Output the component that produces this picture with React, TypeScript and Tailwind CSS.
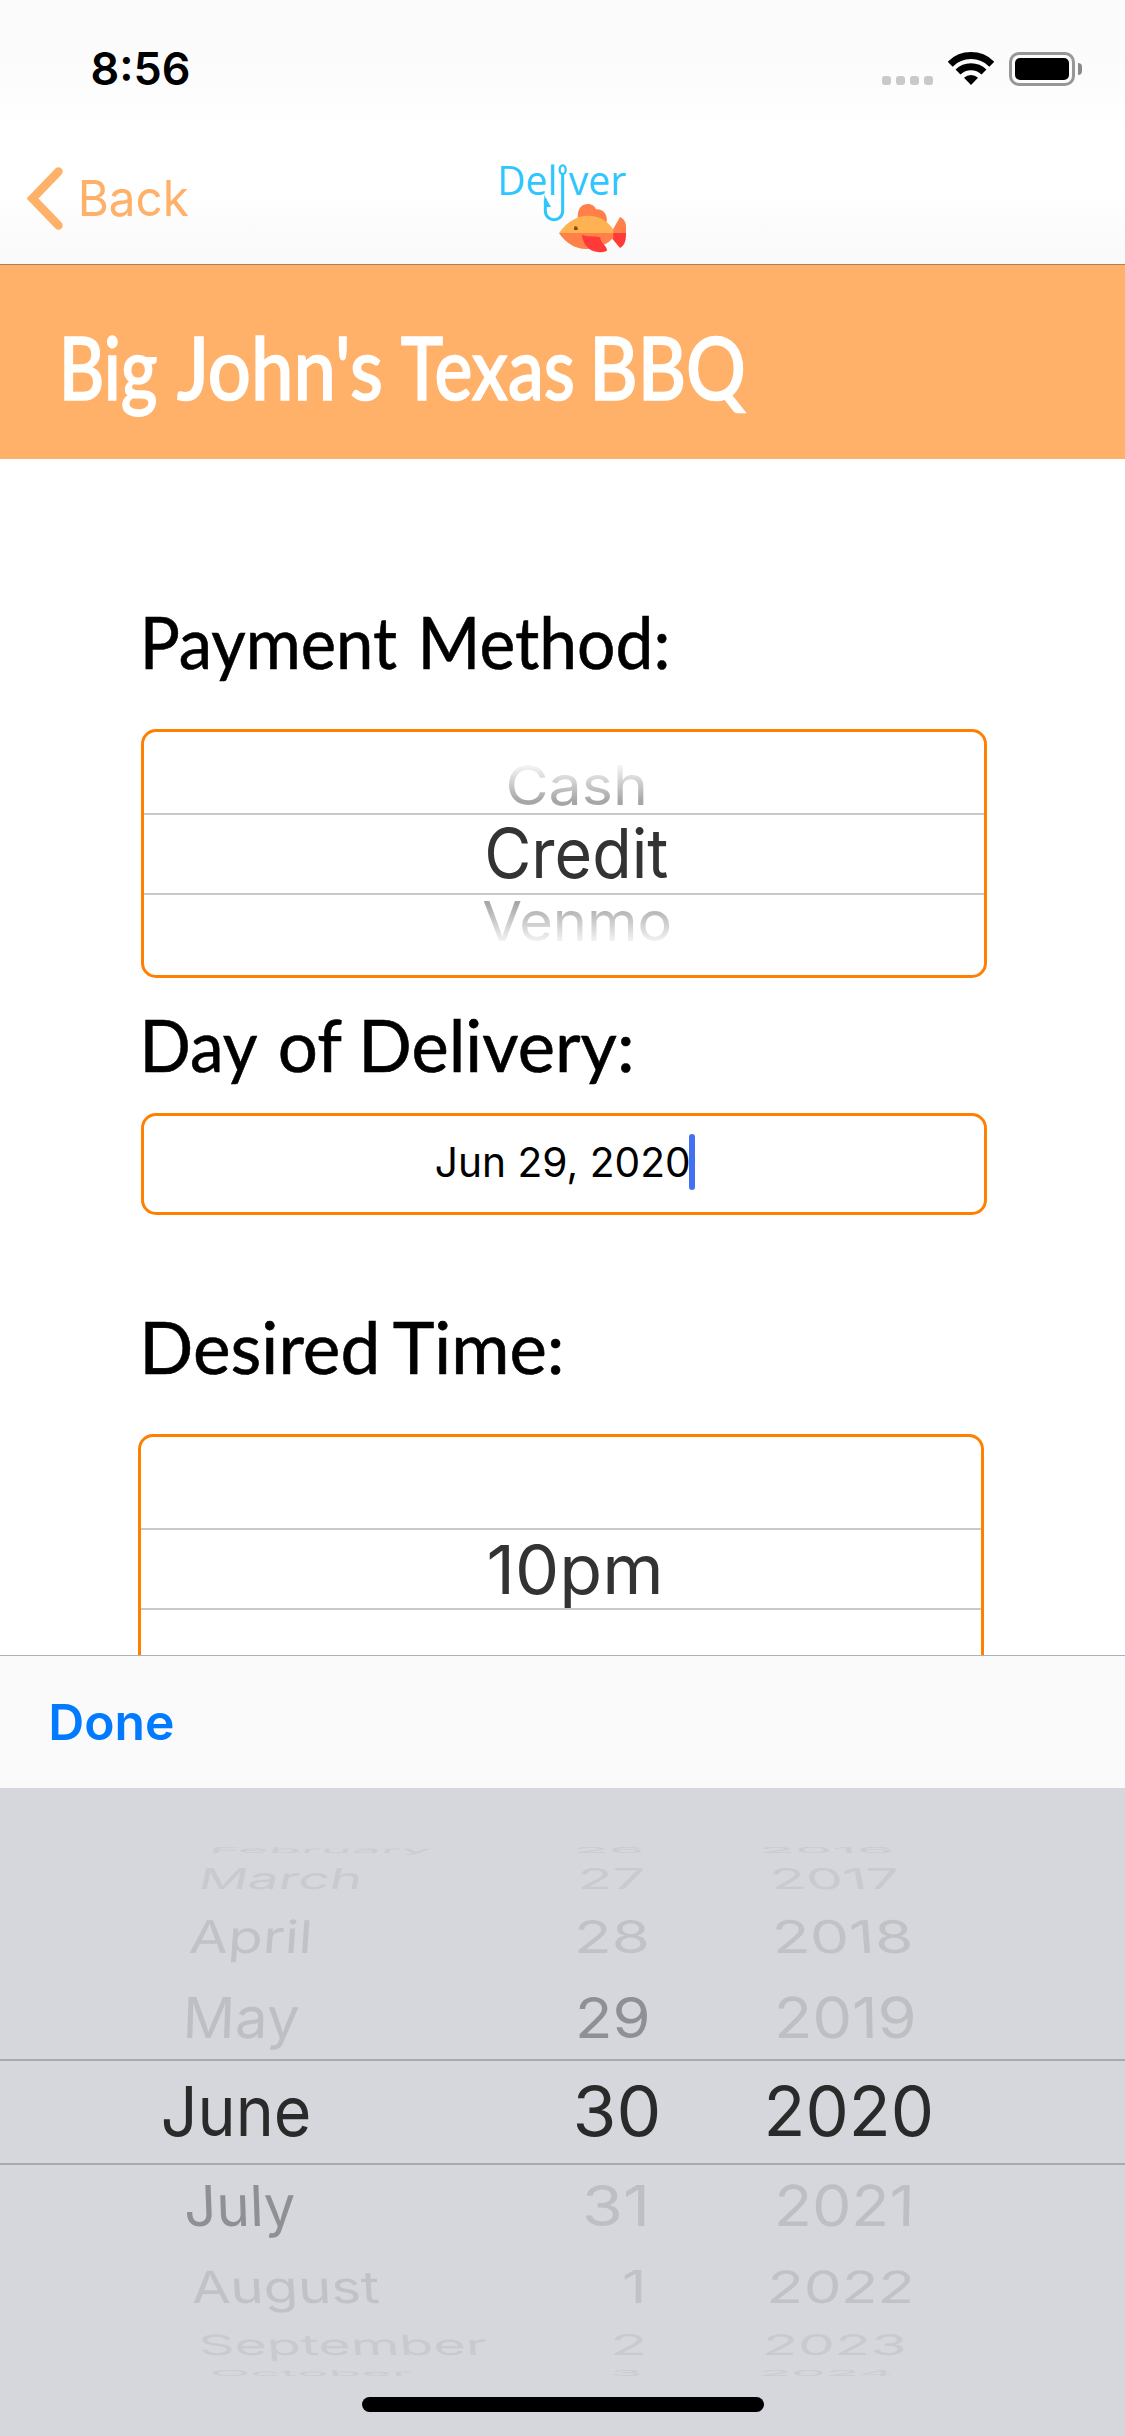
import { useLayoutEffect, useRef } from "react";

/** Text stretched horizontally so that its ink fills the width of its box. */
function FitText({ text, box, className = "", skew = 0 }: { text: string; box: string; className?: string; skew?: number }) {
  const ref = useRef<HTMLSpanElement>(null);
  useLayoutEffect(() => {
    const el = ref.current;
    const ctx = document.createElement("canvas").getContext("2d");
    if (!el || !el.parentElement || !ctx) return;
    const cs = getComputedStyle(el);
    const size = parseFloat(cs.fontSize);
    ctx.font = `${cs.fontWeight} 200px ${cs.fontFamily}`;
    const k = size / 200;
    const m = ctx.measureText(text);
    const ink = (m.actualBoundingBoxLeft + m.actualBoundingBoxRight) * k;
    const scale = (el.parentElement.clientWidth - 1.4) / ink;
    el.style.transform = `translateX(0.7px) skewX(${skew}deg) scaleX(${scale}) translateX(${m.actualBoundingBoxLeft * k}px)`;
  }, [text, skew]);
  return (
    <div className={`shrink-0 ${box}`}>
      <span ref={ref} className={`inline-block origin-left whitespace-nowrap align-top ${className}`}>
        {text}
      </span>
    </div>
  );
}

function StatusBar() {
  return (
    <div className="flex h-[138px] items-start pl-[92px] pt-[46px]">
      <FitText text="8:56" box="w-[97px]" className="text-[45px] font-semibold leading-[46px] text-black" />
      <div className="ml-[693px] mt-[30px] flex gap-[5px]">
        {[0, 1, 2, 3].map((i) => (
          <span key={i} className="h-[9px] w-[9px] rounded-[3px] bg-[#c9c9c9]" />
        ))}
      </div>
      <svg className="ml-[15px] mt-[6px] h-[33px] w-[46px]" viewBox="0 0 46 33" fill="none" stroke="#000" strokeWidth="7">
        <path d="M2.2 12.2A29.5 29.5 0 0 1 43.8 12.2" />
        <path d="M10 20A18.5 18.5 0 0 1 36 20" />
        <path d="M23 33L16 25.8A10 10 0 0 1 30 25.8Z" fill="#000" stroke="none" />
      </svg>
      <div className="ml-[15px] mt-[6px] flex items-center">
        <div className="h-[34px] w-[66px] rounded-[10px] border-[3px] border-[#979797] p-[3px]">
          <div className="h-[22px] w-[54px] rounded-[5px] bg-black" />
        </div>
        <span className="ml-[3px] h-[12px] w-[4px] rounded-r-full bg-[#8a8a8a]" />
      </div>
    </div>
  );
}

function Logo() {
  return (
    <svg className="h-[110px] w-[170px]" viewBox="0 0 510 330">
      <g fill="#2fc6fe" fontFamily="'Open Sans'" fontSize="121">
        <text x="52" y="135" textLength="180" lengthAdjust="spacingAndGlyphs">Del</text>
        <text x="266" y="135" textLength="173" lengthAdjust="spacingAndGlyphs">ver</text>
      </g>
      <ellipse cx="248" cy="59" rx="9" ry="13" fill="none" stroke="#2fc6fe" strokeWidth="7" />
      <path d="M248 72V182C248 218 196 218 196 182V146" fill="none" stroke="#2fc6fe" strokeWidth="9" />
      <path d="M192 134L213 171H196Z" fill="#2fc6fe" />
      <path d="M294 206C290 174 308 162 323 162C337 162 344 169 348 178C370 176 384 194 380 218Z" fill="#ff8048" />
      <path d="M398 240L420 201C432 206 438 218 438 230V249H398Z" fill="#ff8048" />
      <path d="M398 249H438C438 270 436 284 420 294L397 266Z" fill="#ff3a38" />
      <path d="M237 249C262 213 294 197 324 197C362 197 390 220 400 240V249Z" fill="#ffb252" />
      <path d="M237 249H400V262C386 282 354 297 318 297C284 297 256 278 237 249Z" fill="#ff8048" />
      <path d="M306 254C320 262 340 256 360 262C362 280 382 288 381 302C345 316 312 296 306 258Z" fill="#ff3a38" />
      <path d="M284 229h6v3h3v8h-11v-8h2z" fill="#8a4a12" />
    </svg>
  );
}

function NavBar() {
  return (
    <div className="flex h-[126px] items-start pl-[27px]">
      <svg className="mt-[29px] h-[63px] w-[36px]" viewBox="0 0 36 63" fill="none" stroke="#ffb069" strokeWidth="8.5" strokeLinecap="round" strokeLinejoin="miter">
        <path d="M31.5 4.5L5.5 31.5L31.5 58.5" />
      </svg>
      <FitText text="Back" box="ml-[18px] mt-[30px] w-[108px]" className="text-[49.5px] leading-[60px] text-[#ffb069]" />
      <div className="ml-[291px] mt-[12px]">
        <Logo />
      </div>
    </div>
  );
}

function Heading({ words }: { words: [string, string][] }) {
  return (
    <div className="flex h-[72px] pl-[145px] font-[Lato,sans-serif]">
      {words.map(([text, box]) => (
        <FitText key={text} text={text} box={box} className="text-[71px] leading-[76px] text-black [-webkit-text-stroke:0.6px_#000]" />
      ))}
    </div>
  );
}

type Cell = { text: string; box: string; skew?: number; tone?: string };
type Row = { height: string; size: string; color: string; cells: [Cell, Cell, Cell] };

const rows: Row[] = [
  { height: "h-[18px] leading-[20px]", size: "text-[8px]", color: "text-[#cbccd0]", cells: [
    { text: "February", box: "ml-[213px] w-[218px]", skew: -20 }, { text: "26", box: "ml-[37px] w-[65px]" }, { text: "2016", box: "ml-[22px] w-[129px]", skew: 16 }] },
  { height: "h-[40px] leading-[42px]", size: "text-[28.5px]", color: "text-[#c9cacf]", cells: [
    { text: "March", box: "ml-[203px] w-[156px]", skew: -12 }, { text: "27", box: "ml-[41px] w-[62px]" }, { text: "2017", box: "ml-[34px] w-[124px]", skew: 10 }] },
  { height: "h-[75px] leading-[77px]", size: "text-[45px]", color: "text-[#c1c2c6]", cells: [
    { text: "April", box: "ml-[190px] w-[119px]", skew: -4 }, { text: "28", box: "ml-[38px] w-[69px]" }, { text: "2018", box: "ml-[36px] w-[134px]", skew: 4 }] },
  { height: "h-[86px] leading-[90px]", size: "text-[56.5px]", color: "text-[#bebfc3]", cells: [
    { text: "May", box: "ml-[187px] w-[112px]", skew: -2 }, { text: "29", box: "ml-[39px] w-[69px]", tone: "text-[#8f9094]" }, { text: "2019", box: "ml-[38px] w-[136px]", skew: 1 }] },
  { height: "h-[106px] leading-[101px] border-y-2 border-[#a9aaaf]", size: "text-[69px]", color: "text-[#2a2a2a]", cells: [
    { text: "June", box: "ml-[163px] w-[146px]" }, { text: "30", box: "ml-[36px] w-[82px]" }, { text: "2020", box: "ml-[28px] w-[163px]" }] },
  { height: "h-[83px] leading-[82px]", size: "text-[56.5px]", color: "text-[#bebfc3]", cells: [
    { text: "July", box: "ml-[186px] w-[109px]", skew: 2, tone: "text-[#8f9094]" }, { text: "31", box: "ml-[45px] w-[60px]" }, { text: "2021", box: "ml-[38px] w-[132px]", skew: -1 }] },
  { height: "h-[78px] leading-[78px]", size: "text-[44.5px]", color: "text-[#c1c2c6]", cells: [
    { text: "August", box: "ml-[192px] w-[187px]", skew: 3 }, { text: "1", box: "ml-[84px] w-[18px]" }, { text: "2022", box: "ml-[31px] w-[140px]", skew: -3 }] },
  { height: "h-[37px] leading-[38px]", size: "text-[28px]", color: "text-[#c9cacf]", cells: [
    { text: "September", box: "ml-[201px] w-[285px]", skew: 5 }, { text: "2", box: "ml-[74px] w-[30px]" }, { text: "2023", box: "ml-[26px] w-[138px]", skew: -5 }] },
  { height: "h-[20px] leading-[20px]", size: "text-[8px]", color: "text-[#cbccd0]", cells: [
    { text: "October", box: "ml-[212px] w-[199px]", skew: 12 }, { text: "3", box: "ml-[72px] w-[28px]" }, { text: "2024", box: "ml-[21px] w-[131px]", skew: -12 }] },
];

function DateWheel() {
  return (
    <div className="h-[648px] bg-[#d6d7dc] pt-[52px]">
      {rows.map((r) => (
        <div key={r.cells[0].text} className={`grid grid-cols-[540px_200px_385px] ${r.height} ${r.size} ${r.color}`}>
          {r.cells.map((c) => (
            <FitText key={c.text} text={c.text} box={c.box} skew={c.skew} className={c.tone} />
          ))}
        </div>
      ))}
      <div className="mx-auto mt-[14px] h-[15px] w-[402px] rounded-full bg-black" />
    </div>
  );
}

const titleWords: [string, string][] = [
  ["Big", "w-[93px]"],
  ["John's", "ml-[20px] w-[204px]"],
  ["Texas", "ml-[20px] w-[172px]"],
  ["BBQ", "ml-[22px] w-[151px]"],
];

export default function App() {
  return (
    <div className="flex h-[2436px] w-[1125px] flex-col overflow-hidden bg-white font-[Inter,sans-serif]">
      <header className="h-[265px] shrink-0 border-b border-[#b07f55] bg-[linear-gradient(to_bottom,#fbfbfb_0,#fbfbfb_40px,#fdfdfd_95px,#ffffff_130px,#ffffff_190px,#fafafa_250px)]">
        <StatusBar />
        <NavBar />
      </header>

      <div className="flex h-[194px] shrink-0 items-start bg-[#ffb069] pl-[64px] pt-[52px] font-[Lato,sans-serif] text-white">
        {titleWords.map(([text, box]) => (
          <FitText key={text} text={text} box={box} className="text-[86px] font-medium leading-[100px] [-webkit-text-stroke:1.6px_#fff]" />
        ))}
      </div>

      <main className="h-[1196px] shrink-0 overflow-hidden pt-[145px]">
        <Heading words={[["Payment", "w-[252px]"], ["Method:", "ml-[26px] w-[244px]"]]} />
        <div className="ml-[141px] mt-[53px] h-[249px] w-[846px] rounded-[15px] border-[3px] border-[#ff8000]">
          <div className="flex h-[81px] items-end pl-[364px]">
            <FitText text="Cash" box="w-[136px] h-[58px]" className="bg-[linear-gradient(to_bottom,#ffffff_6px,#a6a6a6_46px)] bg-clip-text text-[54.5px] leading-[60px] text-transparent" />
          </div>
          <div className="h-[82px] border-y-2 border-[#c9c9cb] pl-[343px]">
            <FitText text="Credit" box="w-[181px]" className="text-[68.5px] leading-[78px] text-[#333333]" />
          </div>
          <div className="pl-[339px]">
            <FitText text="Venmo" box="w-[187px]" className="bg-[linear-gradient(to_bottom,#a6a6a6_8px,#f6f6f6_48px)] bg-clip-text text-[54.5px] leading-[53px] text-transparent" />
          </div>
        </div>
        <div className="mt-[29px]">
          <Heading words={[["Day", "w-[113px]"], ["of", "ml-[22px] w-[62px]"], ["Delivery:", "ml-[22px] w-[267px]"]]} />
        </div>
        <div className="ml-[141px] mt-[34px] flex h-[102px] w-[846px] items-start rounded-[15px] border-[3px] border-[#ff8000] pl-[292px] pt-[18px]">
          <FitText text="Jun 29, 2020" box="w-[253px]" className="text-[41px] leading-[56px] text-black" />
          <span className="h-[56px] w-[6px] rounded-full bg-[#4470f2]" />
        </div>
        <div className="mt-[94px]">
          <Heading words={[["Desired", "w-[231px]"], ["Time:", "ml-[17px] w-[168px]"]]} />
        </div>
        <div className="ml-[138px] mt-[53px] h-[270px] w-[846px] rounded-[15px] border-[3px] border-[#ff8000] pt-[91px]">
          <div className="h-[82px] border-y-2 border-[#c9c9cb] pl-[348px]">
            <FitText text="10pm" box="w-[170px]" className="text-[68px] leading-[78px] text-[#333333]" />
          </div>
        </div>
      </main>

      <div className="h-[133px] shrink-0 border-t border-[#b0b0b2] bg-[#fafafa] pl-[51px] pt-[29px]">
        <FitText text="Done" box="w-[122px]" className="text-[49.5px] font-semibold leading-[74px] text-[#007aff]" />
      </div>
      <DateWheel />
    </div>
  );
}
